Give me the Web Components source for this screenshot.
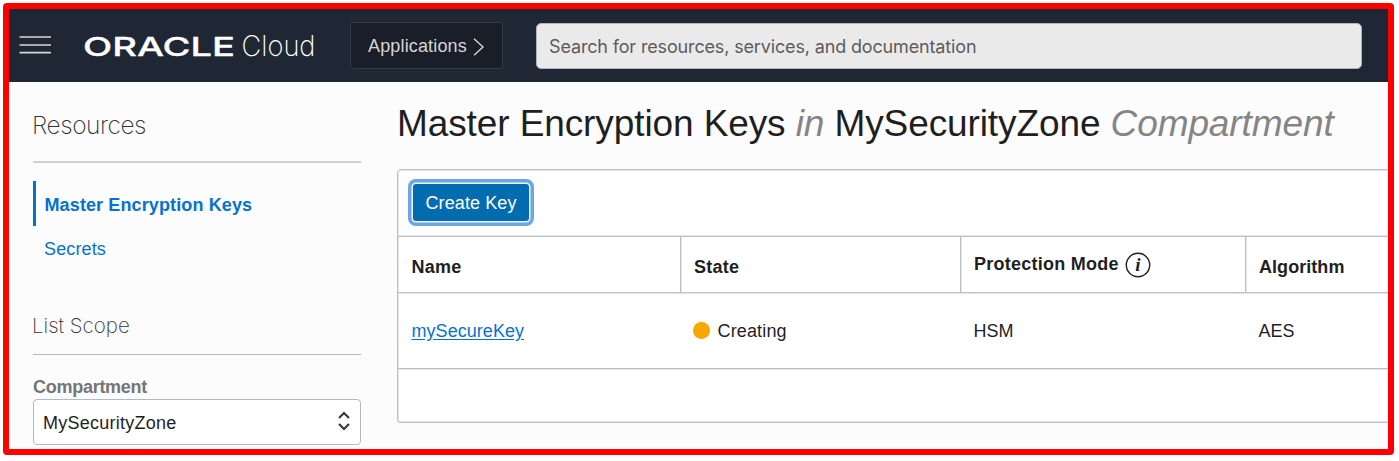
<!DOCTYPE html>
<html lang="en">
<head>
<meta charset="utf-8">
<title>Master Encryption Keys</title>
<style>
html,body{margin:0;background:#fff;height:461px;overflow:hidden}
body{font-family:"Liberation Sans",Arial,sans-serif;font-size:18px;color:#1f1f1f;--line:#bcc1c9;--soft:#e3e5e9;--link:#0572ce}
</style>
</head>
<body>
<console-frame>
  <console-header slot="header"></console-header>
  <console-sidebar slot="side"></console-sidebar>
  <keys-page slot="main"></keys-page>
</console-frame>
<script>
function define(name, html) {
  const t = document.createElement('template');
  t.innerHTML = html;
  customElements.define(name, class extends HTMLElement {
    constructor() {
      super();
      this.attachShadow({mode: 'open'}).appendChild(t.content.cloneNode(true));
    }
  });
}

define('console-frame', `<style>
:host{display:flex;flex-direction:column;box-sizing:border-box;width:1391px;height:452px;margin:3px;border:6px solid #f00;border-radius:4px;background:#fcfcfc}
.body{display:flex;flex:1;min-height:0;overflow:hidden}
</style><slot name="header"></slot><div class="body"><slot name="side"></slot><slot name="main"></slot></div>`);

define('nav-toggle', `<style>
:host{display:block;width:32px;height:18px}svg{display:block}
</style><svg width="32" height="18" viewBox="0 0 32 18" stroke="#d6d8da" stroke-width="1.7"><path d="M.5 1H32M.5 9H32M.5 16.6H32"/></svg>`);

define('brand-logo', `<style>
:host{display:block}svg{display:block;overflow:visible}text{fill:#fff}
.o{font:500 26px Inter,sans-serif;stroke:#fff;stroke-width:.3px}.c{font:250 28px Inter,sans-serif}
</style><svg width="236" height="40" viewBox="0 0 236 40">
<text class="o" x="-1" y="33" textLength="152" lengthAdjust="spacingAndGlyphs">ORACLE</text>
<text class="c" x="157.5" y="33" textLength="74" lengthAdjust="spacingAndGlyphs">Cloud</text></svg>`);

define('app-switch', `<style>
:host{display:flex;align-items:center;box-sizing:border-box;width:153px;height:47px;padding:0 0 0 17px;border:1px solid #343c48;border-radius:3px;background:#191e28;color:#d5d6d8;gap:6px}
span{font-size:18px;line-height:20px;letter-spacing:.15px}
svg{display:block;margin-top:2px}
</style><span><slot></slot></span><svg width="12" height="18" viewBox="0 0 12 18" fill="none" stroke="#d5d6d8" stroke-width="1.4"><path d="M1 .7 10 9 1 17.3"/></svg>`);

define('search-box', `<style>
:host{display:flex;align-items:center;box-sizing:border-box;width:826px;height:46px;padding:2px 0 0 12px;border:1px solid #aeb5bf;border-radius:5px;background:#eaeaea;color:#5c5c5c}
span{font:400 18px/24px Inter,sans-serif;letter-spacing:-.15px;white-space:nowrap}
</style><span><slot></slot></span>`);

define('console-header', `<style>
:host{display:flex;align-items:flex-start;box-sizing:border-box;height:73px;flex:none;background:#1e2733}
nav-toggle{margin:27px 0 0 10px}brand-logo{margin:14px 0 0 33px}
app-switch{margin:13px 0 0 30px}search-box{margin:14px 0 0 33px}
</style><nav-toggle></nav-toggle><brand-logo></brand-logo><app-switch>Applications</app-switch><search-box>Search for resources, services, and documentation</search-box>`);

define('side-heading', `<style>
:host{display:block;box-sizing:border-box;font-family:Inter,sans-serif;font-weight:200;color:#333;border-bottom:1px solid #b3b9c4;white-space:nowrap}
</style><slot></slot>`);

define('side-link', `<style>
:host{display:block;box-sizing:border-box;padding-left:11px;height:45px;line-height:46px;color:var(--link);letter-spacing:.14px}
:host([active]){font-weight:700;line-height:48px;border-left:3px solid var(--link);padding-left:8.5px;letter-spacing:.12px}
</style><slot></slot>`);

define('scope-select', `<style>
:host{display:flex;align-items:center;justify-content:space-between;box-sizing:border-box;width:328px;height:46px;padding:2px 10px 0 9px;border:1px solid #b3b9c2;border-radius:4px;background:#fff;letter-spacing:.25px}
svg{display:block;margin-top:-4px}
</style><span><slot></slot></span><svg width="12" height="20" viewBox="0 0 12 20" fill="none" stroke="#3a3a3a" stroke-width="2.2"><path d="M1 7 6 2 11 7M1 13 6 18 11 13"/></svg>`);

define('console-sidebar', `<style>
:host{display:block;flex:none;width:328px;margin-left:24px}
.r{height:81px;padding-top:28px;font-size:24.5px;line-height:30px;letter-spacing:-.45px;text-indent:-1px;border-bottom:2px solid #cdd0d5}
.links{margin:18px 0 0}
.l{height:56px;margin-top:28px;padding-top:14px;font-size:20.5px;line-height:26px;text-indent:-1px}
label{display:block;margin-top:22px;height:22px;line-height:20px;font-weight:700;color:#757575;letter-spacing:-.27px}
</style>
<side-heading class="r">Resources</side-heading>
<div class="links"><side-link active>Master Encryption Keys</side-link><side-link>Secrets</side-link></div>
<side-heading class="l">List Scope</side-heading>
<label>Compartment</label>
<scope-select>MySecurityZone</scope-select>`);

define('primary-button', `<style>
:host{display:flex;align-items:center;justify-content:center;box-sizing:border-box;width:116px;height:37px;padding-top:2px;border-radius:3px;background:#036caf;color:#fff;letter-spacing:.1px;box-shadow:0 0 0 1.5px #eef5fc,0 0 0 5px #6fa5e2}
</style><slot></slot>`);

define('info-icon', `<style>
:host{display:block;width:26px;height:26px}svg{display:block}
text{font:italic 700 19px "Liberation Serif",serif;fill:#1f1f1f}
</style><svg width="26" height="26" viewBox="0 0 26 26"><circle cx="13" cy="13" r="11.7" fill="none" stroke="#1f1f1f" stroke-width="1.4"/><text x="13" y="19" text-anchor="middle">i</text></svg>`);

define('state-badge', `<style>
:host{display:flex;align-items:center;gap:8px;letter-spacing:.15px}i{display:block;width:16.5px;height:16.5px;border-radius:50%;background:#f7a700;margin:-1px 0 0 -.5px}
</style><i></i><span><slot></slot></span>`);

define('keys-table', `<style>
:host{display:grid;grid-template-columns:282px 280px 285px 143px;grid-template-rows:56px 76px;white-space:nowrap}
div{display:flex;align-items:center;box-sizing:border-box;padding-left:13px}
.h{font-weight:700;letter-spacing:.25px;border-left:1px solid var(--line);border-bottom:1px solid var(--line);padding-top:6px;box-shadow:inset 1px 0 var(--soft),0 1px var(--soft)}
.c{border-bottom:1px solid var(--line);padding:1px 0 0 13.5px;box-shadow:0 1px var(--soft)}
.first{border-left:0;padding-left:13.5px;box-shadow:0 1px var(--soft)}
.p{align-items:flex-start;padding-top:16px;line-height:22px;gap:6px}
.p info-icon{margin-top:-1px}
.a{letter-spacing:.05px}
a{color:var(--link);letter-spacing:.05px;text-decoration:underline;text-underline-offset:2px}
</style>
<div class="h first">Name</div><div class="h">State</div><div class="h p">Protection Mode<info-icon></info-icon></div><div class="h a">Algorithm</div>
<div class="c first"><a href="#">mySecureKey</a></div><div class="c"><state-badge>Creating</state-badge></div><div class="c">HSM</div><div class="c">AES</div>`);

define('list-panel', `<style>
:host{display:block;box-sizing:border-box;height:254px;border:1px solid var(--line);border-right:0;border-radius:4px 0 0 4px;background:#fff;box-shadow:inset 1px 1px var(--soft),inset 0 -1px var(--soft)}
.bar{display:flex;align-items:flex-start;box-sizing:border-box;height:67px;padding:14px 0 0 15px;border-bottom:1px solid var(--line);box-shadow:inset 1px 1px var(--soft),inset 0 -1px var(--soft)}
</style><div class="bar"><slot name="actions"></slot></div><slot></slot>`);

define('keys-page', `<style>
:host{display:block;flex:1;min-width:0;margin-left:36px;overflow:hidden}
h1{margin:19px 0 24px;height:44px;font-weight:400;font-size:37px;line-height:45px;letter-spacing:-.1px;white-space:nowrap}
em{color:#858585}
</style>
<h1>Master Encryption Keys <em>in</em> MySecurityZone <em>Compartment</em></h1>
<list-panel><primary-button slot="actions">Create Key</primary-button><keys-table></keys-table></list-panel>`);
</script>
</body>
</html>
